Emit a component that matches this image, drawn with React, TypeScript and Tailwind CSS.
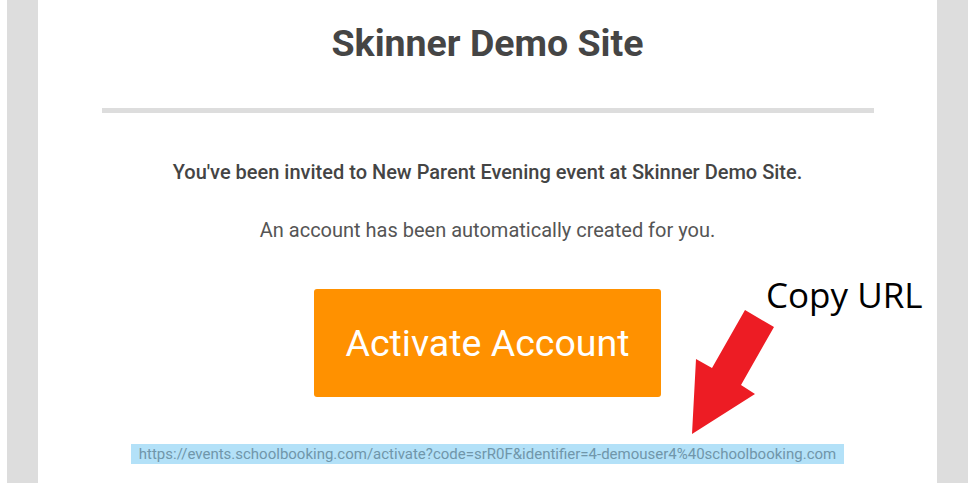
export default function App() {
  const url =
    "https://events.schoolbooking.com/activate?code=srR0F&identifier=4-demouser4%40schoolbooking.com";

  return (
    <div className="relative h-[483px] w-[975px] overflow-hidden bg-white px-[7px] font-['Roboto',sans-serif]">
      <div className="h-full bg-[#dddddd] px-[31px]">
        <div className="flex h-full flex-col items-center bg-white pt-[21px]">
          <h1 className="text-[37.5px] leading-[44px] font-bold text-[#454545]">Skinner Demo Site</h1>

          <div className="mt-[43px] h-[5px] w-[772px] bg-[#dddddd]" />

          <p className="mt-[47px] text-[20px] leading-[24px] font-medium text-[#444444]">
            You've been invited to New Parent Evening event at Skinner Demo Site.
          </p>
          <p className="mt-[34px] text-[20px] leading-[24px] text-[#555555]">
            An account has been automatically created for you.
          </p>

          <button className="mt-[47px] flex h-[108px] w-[347px] items-center justify-center rounded-[3px] bg-[#ff9100] text-[37.5px] text-white">
            Activate Account
          </button>

          <div className="mt-[45px]">
            <span className="inline-block bg-[#b3e1f8] px-2 text-[15px] leading-[20px] text-[#7096aa]">{url}</span>
          </div>
        </div>
      </div>

      {/* annotation */}
      <div className="absolute top-[272px] left-[766px] font-['Open_Sans',sans-serif] text-[35px] leading-[46px] text-black">
        Copy URL
      </div>
      <svg className="absolute top-0 left-0" width="975" height="483" viewBox="0 0 975 483">
        <polygon
          points="745,310 774,327 741,385 755,394 692,434 696,359 712,368"
          fill="#ed1c24"
        />
      </svg>
    </div>
  );
}
